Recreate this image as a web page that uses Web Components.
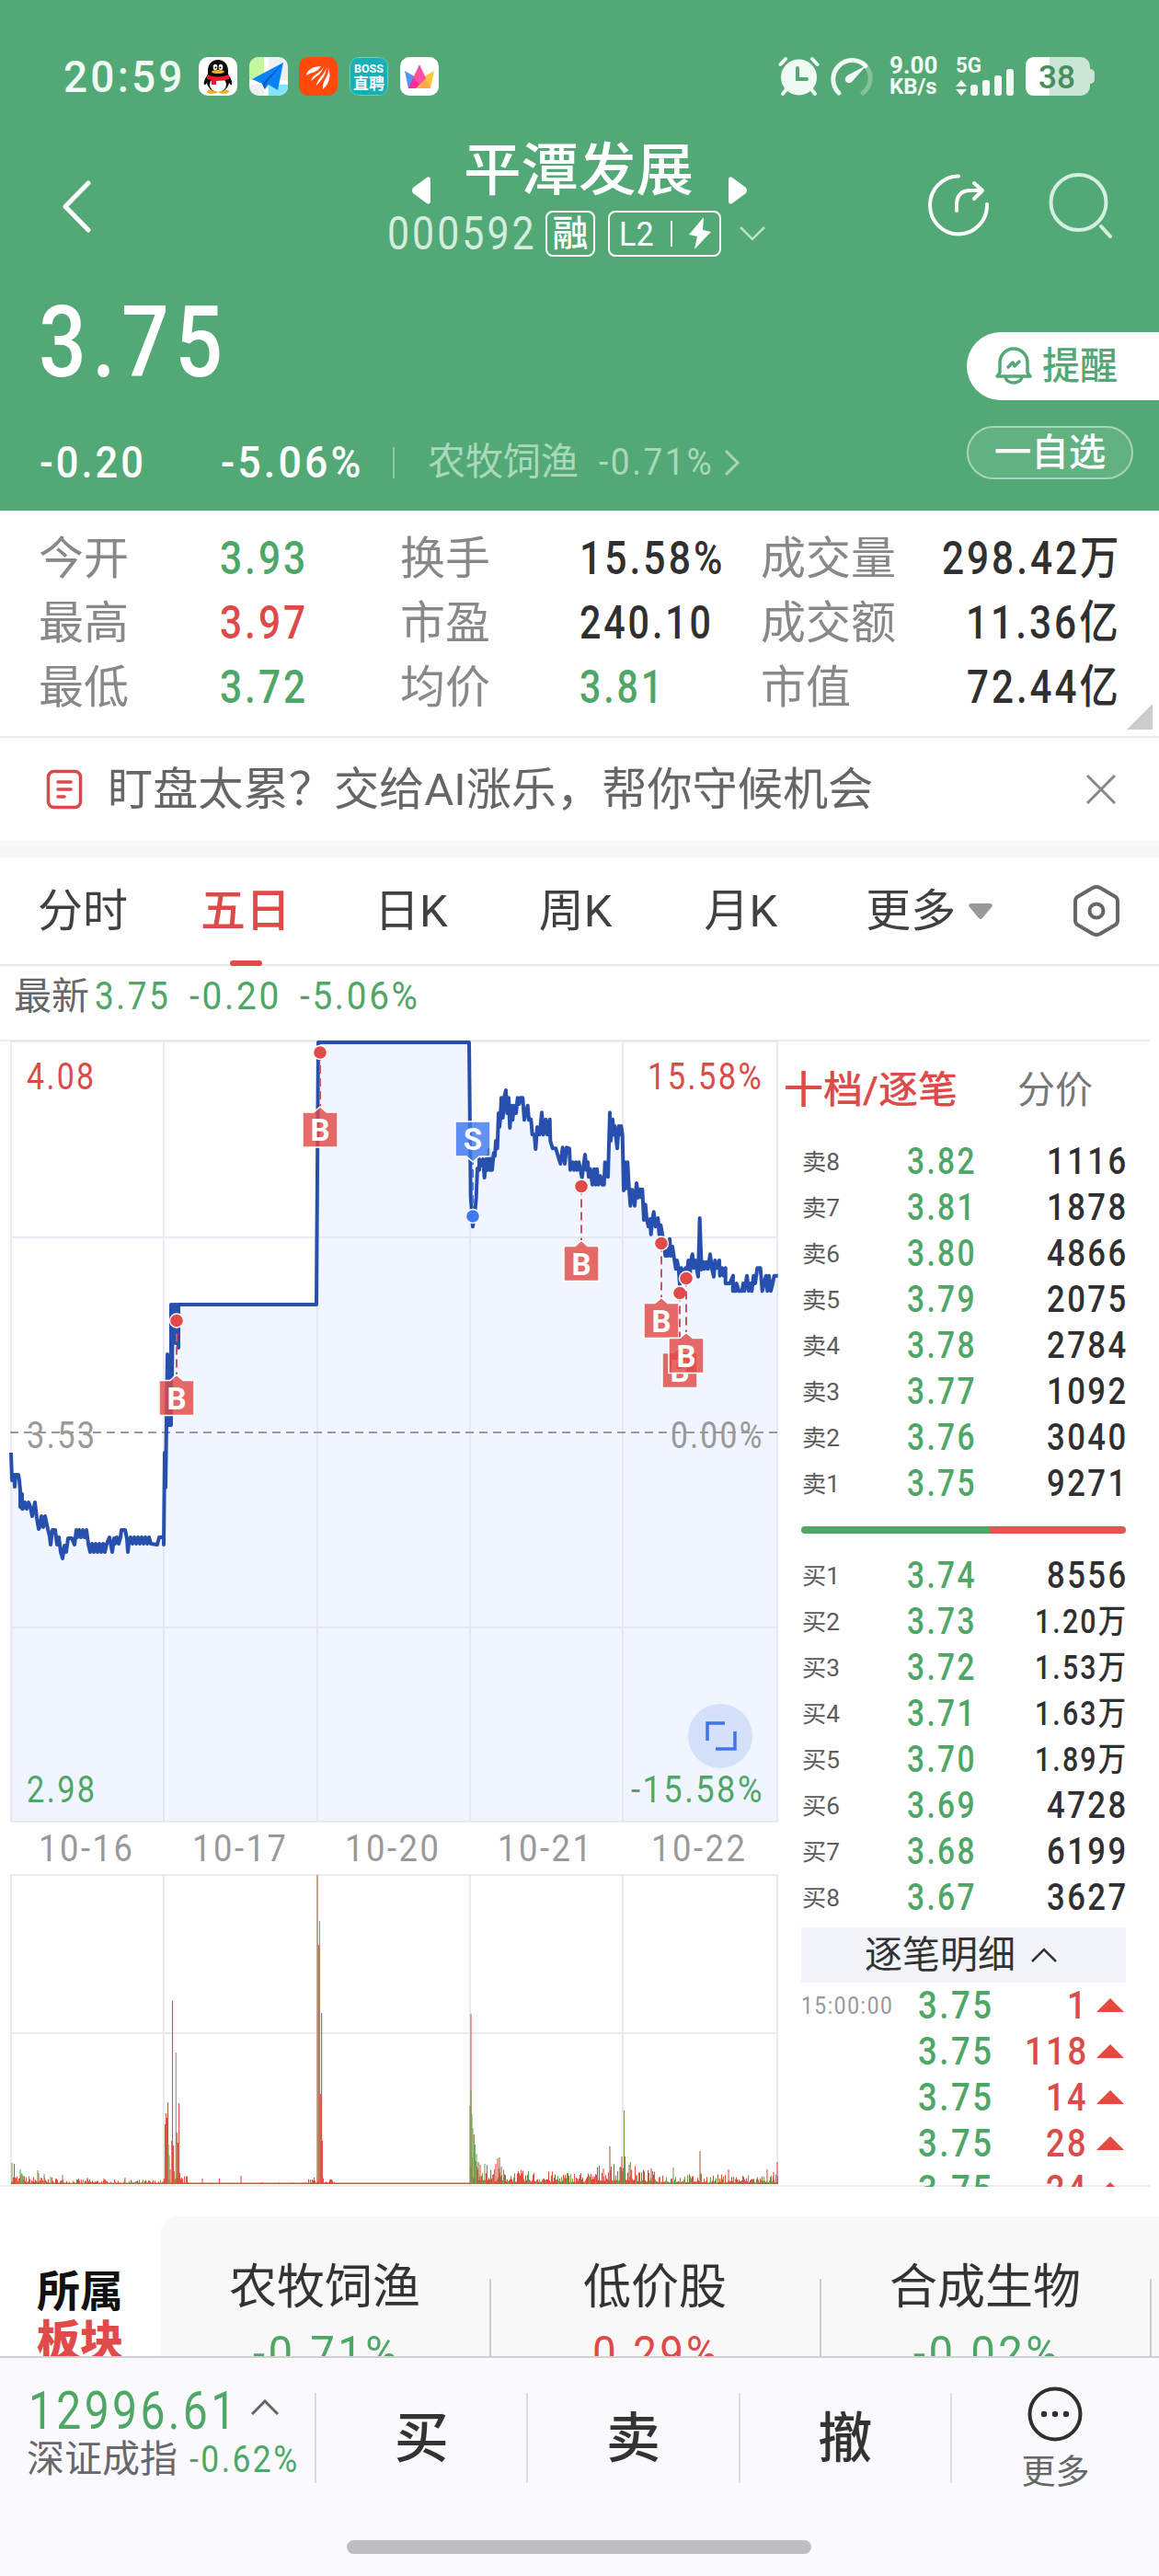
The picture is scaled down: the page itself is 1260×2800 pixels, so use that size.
<!DOCTYPE html>
<html lang="zh-CN">
<head>
<meta charset="utf-8">
<title>平潭发展 000592</title>
<style>
  body {
    margin: 0;
    width: 1260px;
    height: 2800px;
    overflow: hidden;
    background: #fefefe;
    font-family: Roboto, "Noto Sans CJK SC", sans-serif;
    font-size: 49px;
    line-height: 1;
    color: #333;
    --up: #dd4b49;
    --down: #4fa767;
    --line: #ececec;
  }
</style>
</head>
<body>
<stock-header></stock-header>
<quote-stats></quote-stats>
<notice-bar>盯盘太累？交给AI涨乐，帮你守候机会</notice-bar>
<period-tabs></period-tabs>
<market-panel></market-panel>
<sector-strip></sector-strip>
<trade-bar></trade-bar>

<script>
// every element here is markup + styles
function define(name, css, html, render) {
  customElements.define(name, class extends HTMLElement {
    constructor() {
      super();
      this.attachShadow({ mode: 'open' });
    }
    connectedCallback() {
      const body = typeof html === 'function' ? html(this) : html;
      this.shadowRoot.innerHTML = `<style>:host { display: block; box-sizing: border-box; } * { box-sizing: border-box; } svg { display: block; flex: none; } ${css}</style>${body}`;
      if (render) render(this.shadowRoot, this);
    }
  });
}

// one line of text condensed to the width given in w, tight keeps the normal spacing
define('fit-text', `
  :host { display: inline-block; flex: none; white-space: nowrap; }
  span { display: inline-block; transform-origin: 0 50%; letter-spacing: .07em; }
  :host([tight]) span { letter-spacing: 0; }
`, el => `<span>${el.textContent}</span>`, (root, el) => {
  const span = root.querySelector('span');
  const w = Number(el.getAttribute('w'));
  const tail = parseFloat(getComputedStyle(span).letterSpacing) || 0;
  el.style.width = w + 'px';
  span.style.transform = `scaleX(${w / (span.offsetWidth - tail)})`;
});

define('status-bar', `
  :host { height: 130px; padding: 62px 70px 0 69px; }
  .bar { display: flex; align-items: center; height: 42px; color: #f1f9f4; }
  .time { font-size: 49px; font-weight: 500; margin-right: 18px; }
  .apps { display: flex; gap: 12.7px; }
  .apps svg { border-radius: 10px; }
  .sys { margin-left: auto; display: flex; align-items: center; height: 42px; }
  .speed { display: flex; flex-direction: column; justify-content: space-between; height: 44px; font-weight: 700; margin: 0 20px 0 18px; font-size: 26px; line-height: 21px; }
  .speed fit-text + fit-text { font-size: 23px; }
`, `
  <div class="bar">
    <fit-text class="time" w="129">20:59</fit-text>
    <div class="apps">
      <svg width="42" height="42" viewBox="0 0 42 42">
        <rect width="42" height="42" fill="#fff"/>
        <ellipse cx="15" cy="37.500" rx="6" ry="2.500" fill="#f3b12c"/><ellipse cx="27" cy="37.500" rx="6" ry="2.500" fill="#f3b12c"/>
        <path d="M21 3c-7 0-11 5-11 12v4c-3 4-5 8-4 11 1 1 2-1 3-2 1 6 6 10 12 10s11-4 12-10c1 1 2 3 3 2 1-3-1-7-4-11v-4C32 8 28 3 21 3z" fill="#080808"/>
        <ellipse cx="21" cy="30" rx="9" ry="8" fill="#fff"/>
        <ellipse cx="18" cy="11" rx="2.300" ry="3.300" fill="#fff"/><ellipse cx="24" cy="11" rx="2.300" ry="3.300" fill="#fff"/>
        <circle cx="18.500" cy="11.500" r="1"/><circle cx="23.500" cy="11.500" r="1"/>
        <ellipse cx="21" cy="16" rx="7" ry="2" fill="#f3a72c"/>
        <path d="M9 19q12 5 24 0v5q-6 2-14 2v4h-5v-5l-5-1z" fill="#e8192d"/>
      </svg>
      <svg width="42" height="42" viewBox="0 0 42 42">
        <rect width="42" height="42" fill="#eef1f3"/><path d="M0 0h16v26H0z" fill="#c3f89e"/><path d="M20 30h22v12H20z" fill="#86e2fd"/>
        <path d="M16 0h5v42h-5zM0 25h42v5H0z" fill="#fff"/>
        <path d="M37 6L3 24l11 5 3 6 4-5 10 6z" fill="#0a83f8"/><path d="M37 6L14 29l3 6 1-6z" fill="#0659c4"/>
      </svg>
      <svg width="42" height="42" viewBox="0 0 42 42">
        <rect width="42" height="42" fill="#ff4a0b"/>
        <g fill="#fff"><path d="M24 10C16 10 8 14 8 20c6-4 12-3 16-10z"/><path d="M27 9c-1 8-12 9-14 17 7-6 13-8 14-17z"/><path d="M29 9c2 9-9 13-10 22 6-7 12-12 10-22z"/><path d="M31 10c4 10-6 14-5 25 7-6 10-15 5-25z"/></g>
      </svg>
      <svg width="42" height="42" viewBox="0 0 42 42">
        <rect x=".5" y=".5" width="41" height="41" rx="9" fill="#18afb6" stroke="#68d0c0"/>
        <text x="5" y="17" font-size="12.500" font-weight="700" fill="#fff" textLength="32" lengthAdjust="spacingAndGlyphs">BOSS</text>
        <text x="21" y="34.500" font-size="17" font-weight="700" fill="#fff" text-anchor="middle">直聘</text>
      </svg>
      <svg width="42" height="42" viewBox="0 0 42 42">
        <rect width="42" height="42" fill="#fff"/>
        <path d="M5 15l14 8-2 11H9z" fill="#5b8df5"/><path d="M37 15l-14 8 2 11h8z" fill="#ffc53a"/>
        <path d="M21 8l7 15-7 11-7-11z" fill="#ff4fa0"/><path d="M14 23l12 11H9z" fill="#f12e9b"/><path d="M28 23L17 34h16z" fill="#ffa74c"/>
      </svg>
    </div>
    <div class="sys">
      <svg width="45" height="44" viewBox="0 0 45 44">
        <g stroke="#f1f9f4" stroke-width="4" stroke-linecap="round"><path d="M2.500 9L8 3M42.500 9L37 3M9 36l-4 5M36 36l4 5"/></g>
        <circle cx="22.500" cy="23" r="19.500" fill="#f1f9f4"/><path d="M21 13v12h10" fill="none" stroke="#53a975" stroke-width="4" stroke-linecap="round"/>
      </svg>
      <svg width="48" height="44" viewBox="0 0 48 44" style="margin-left:10px" fill="none" stroke-linecap="round">
        <path d="M40 10.500A20 20 0 0 1 37 40" stroke="#83c29b" stroke-width="5"/>
        <path d="M11 40A20 20 0 1 1 40 10.500" stroke="#f1f9f4" stroke-width="5"/>
        <path d="M41 10L20 21q-4 4-1 7 4 3 7-1z" fill="#f1f9f4"/>
      </svg>
      <div class="speed"><fit-text tight w="52">9.00</fit-text><fit-text tight w="52">KB/s</fit-text></div>
      <svg width="64" height="44" viewBox="0 0 64 44" fill="#f1f9f4">
        <text x="0" y="18" font-size="24" font-weight="700" textLength="28" lengthAdjust="spacingAndGlyphs">5G</text>
        <path d="M6 26l6 7H0zM6 43l6-7H0z"/>
        <rect x="16" y="31" width="8" height="12" rx="3"/><rect x="29" y="26" width="8" height="17" rx="3"/><rect x="42" y="21" width="8" height="22" rx="3"/><rect x="55" y="14" width="8" height="29" rx="3"/>
      </svg>
      <svg width="75" height="42" viewBox="0 0 75 42" style="margin-left:12px">
        <path d="M68 13h3q4 1 4 5v6q0 4-4 5h-3z" fill="#cbe5d6"/><rect width="70" height="42" rx="10" fill="#cbe5d6"/>
        <path d="M10 0h16v42H10Q0 42 0 32V10Q0 0 10 0z" fill="#fff"/>
        <text x="14" y="33.500" font-size="35" font-weight="500" fill="#468d60" textLength="40" lengthAdjust="spacingAndGlyphs">38</text>
      </svg>
    </div>
  </div>
`);

define('stock-header', `
  :host { height: 555px; background: #53a975; color: #fff; }
  .nav { height: 170px; display: flex; padding-left: 66px; padding-top: 22px; }
  .back { margin-top: 43px; }
  .mid { width: 430px; margin-left: 320px; display: flex; flex-direction: column; flex: none; }
  .name { display: flex; height: 68px; align-items: center; font-size: 62.500px; font-weight: 500; padding-left: 28px; }
  .name svg { margin-top: 42px; }
  .name span { margin: 0 38px 0 36px; width: 250px; }
  .code { display: flex; align-items: center; height: 50px; margin-top: 9px; padding-left: 1px; }
  .code > fit-text { color: #d5ecdf; font-size: 50px; font-weight: 400; }
  .tag { height: 50px; border: 2.500px solid #fff; border-radius: 8px; display: flex; align-items: center; justify-content: center; font-size: 39px; }
  .rong { width: 54px; margin: 0 14px 0 12px; font-weight: 500; }
  .level { width: 123px; font-size: 37px; gap: 18px; }
  .level i { width: 2px; height: 28px; background: #fff; margin-right: 1px; }
  .level svg { margin-left: -1px; }
  .acts { display: flex; margin: 36px 0 0 158px; gap: 64px; }
  .price { height: 60px; display: flex; justify-content: space-between; padding-left: 42px; }
  .big { font-size: 107px; font-weight: 500; line-height: 146px; }
  .remind { width: 209px; height: 74px; margin-top: 61px; border-radius: 37px 0 0 37px; background: #fff; color: #53a975; display: flex; align-items: center; font-size: 41px; font-weight: 500; padding-left: 31px; gap: 11px; }
  .row { height: 79px; margin-top: 103px; display: flex; align-items: center; font-size: 49px; padding-left: 43px; font-weight: 500; }
  .row i { width: 2px; height: 34px; background: #91c9a7; margin: 0 36px 0 35px; }
  .dim { font-size: 41px; color: #a9d8bd; font-weight: 400; }
  .watch { margin-left: auto; margin-right: 28px; width: 181px; height: 58px; border: 2px solid #a9d4ba; border-radius: 29px; background: #61b181; display: flex; align-items: center; justify-content: center; align-self: flex-start; font-size: 40.500px; }
`, `
  <status-bar></status-bar>
  <div class="nav">
    <svg class="back" width="34" height="58" viewBox="0 0 34 58" fill="none" stroke="#fff" stroke-width="5" stroke-linecap="round" stroke-linejoin="round"><path d="M30 4L5 29.500 30 55"/></svg>
    <div class="mid">
      <div class="name">
        <svg width="20" height="30" viewBox="0 0 20 30" fill="#fff"><path d="M20 2v26q-2 3-4 1L1 18q-2-3 0-6L16 1q2-2 4 1z"/></svg>
        <span>平潭发展</span>
        <svg width="20" height="30" viewBox="0 0 20 30" fill="#fff"><path d="M0 2v26q2 3 4 1l15-11q2-3 0-6L4 1Q2-1 0 2z"/></svg>
      </div>
      <div class="code">
        <fit-text w="160">000592</fit-text>
        <div class="tag rong">融</div>
        <div class="tag level"><fit-text tight w="38">L2</fit-text><i></i>
          <svg width="24" height="36" viewBox="0 0 24 36" fill="#fff"><path d="M16 0L0 19l9 2-3 14L24 16l-9-2z"/></svg>
        </div>
        <svg width="28" height="16" viewBox="0 0 28 16" style="margin-left:20px" fill="none" stroke="#bfe0cc" stroke-width="2.500"><path d="M1 1l13 13L27 1"/></svg>
      </div>
    </div>
    <div class="acts">
      <svg width="68" height="72" viewBox="0 0 68 72" fill="none" stroke="#fff" stroke-width="4" stroke-linecap="round" stroke-linejoin="round">
        <path d="M34 3.500A31 31.500 0 1 0 65 34"/><path d="M32 41V33q1-14 15-14h12M51 11l9 8-9 9"/>
      </svg>
      <svg width="72" height="72" viewBox="0 0 72 72" fill="none" stroke="#d5f0e0" stroke-width="4" stroke-linecap="round"><circle cx="32.500" cy="32" r="30"/><path d="M57 58l10 11"/></svg>
    </div>
  </div>
  <div class="price">
    <fit-text class="big" w="200">3.75</fit-text>
    <div class="remind">
      <svg width="40" height="42" viewBox="0 0 40 42" fill="none" stroke="#53a975" stroke-width="3.500" stroke-linejoin="round" stroke-linecap="round">
        <path d="M2 32l3-4V17a15 15 0 0 1 30 0v11l3 4z"/><path d="M11 33c2 8 16 8 18 0M14 22l5-5 2 4 5-5"/>
      </svg>提醒
    </div>
  </div>
  <div class="row">
    <fit-text w="113">-0.20</fit-text>
    <fit-text w="152" style="margin-left:84px">-5.06%</fit-text><i></i>
    <span class="dim">农牧饲渔</span>
    <fit-text class="dim" w="123" style="margin-left:22px">-0.71%</fit-text>
    <svg width="18" height="30" viewBox="0 0 18 30" style="margin-left:13px" fill="none" stroke="#a9d4ba" stroke-width="3"><path d="M2 2l13 13L2 28"/></svg>
    <div class="watch">一自选</div>
  </div>
`);

define('quote-stats', `
  :host { height: 247px; padding: 17px 0 0 42px; border-bottom: 2px solid var(--line); position: relative; }
  .grid { display: grid; grid-template-columns: 197px 196px 195px 197px 150px 239px; grid-auto-rows: 70px; align-items: center; width: 1174px; }
  .grid > :nth-child(6n) { justify-self: end; }
  span { color: #888; }
  fit-text { font-weight: 500; font-size: 50px; color: #303030; }
  .up { color: var(--up); }
  .down { color: var(--down); }
  .fold { position: absolute; right: 7px; bottom: 7px; }
`, `
  <div class="grid">
    <span>今开</span><fit-text class="down" w="93">3.93</fit-text><span>换手</span><fit-text w="155">15.58%</fit-text><span>成交量</span><fit-text w="192">298.42万</fit-text>
    <span>最高</span><fit-text class="up" w="93">3.97</fit-text><span>市盈</span><fit-text w="143">240.10</fit-text><span>成交额</span><fit-text w="166">11.36亿</fit-text>
    <span>最低</span><fit-text class="down" w="93">3.72</fit-text><span>均价</span><fit-text class="down" w="90">3.81</fit-text><span>市值</span><fit-text w="165">72.44亿</fit-text>
  </div>
  <svg class="fold" width="28" height="28" viewBox="0 0 28 28"><path d="M28 0v28H0z" fill="#ccc"/></svg>
`);

define('notice-bar', `
  :host { display: flex; align-items: center; height: 112px; padding: 0 47px 0 50px; color: #666; }
  .text { margin-left: 27px; }
  svg:last-child { margin-left: auto; }
`, el => `
  <svg width="40" height="44" viewBox="0 0 40 44" fill="none" stroke="#d9494c" stroke-width="3.500" stroke-linecap="round">
    <rect x="2.500" y="2.500" width="35" height="39" rx="6"/><path d="M13 14h14M13 22h14M13 30h7"/>
  </svg>
  <fit-text tight class="text" w="832">盯盘太累？交给AI涨乐，帮你守候机会</fit-text>
  <svg width="32" height="32" viewBox="0 0 32 32" stroke="#888" stroke-width="3"><path d="M1 1l30 30M31 1L1 31"/></svg>
`);

define('period-tabs', `
  :host { height: 136px; border-top: 18px solid #f7f7f7; border-bottom: 2px solid #e9e9e9; }
  .tabs { display: flex; align-items: center; height: 116px; padding-left: 41px; color: #404040; }
  .tabs > * { flex: none; }
  .tab { height: 116px; display: flex; flex-direction: column; align-items: center; justify-content: center; }
  .on { color: var(--up); font-weight: 500; }
  .on::after { content: ""; width: 35px; height: 6px; border-radius: 3px; background: #e04b4a; margin-top: 29px; margin-bottom: -35px; }
`, `
  <div class="tabs">
    <div class="tab" style="width:98px">分时</div>
    <div class="tab on" style="width:98px;margin-left:79px">五日</div>
    <div class="tab" style="margin-left:91px">日K</div>
    <div class="tab" style="margin-left:99px">周K</div>
    <div class="tab" style="margin-left:100px">月K</div>
    <div class="tab" style="margin-left:96px">更多</div>
    <svg width="26" height="17" viewBox="0 0 26 17" style="margin-left:14px" fill="#999"><path d="M2 0h22q3 1 1 4L15 16q-2 2-4 0L1 4Q-1 1 2 0z"/></svg>
    <svg width="52" height="58" viewBox="0 0 52 58" style="margin-left:87px" fill="none" stroke="#666" stroke-width="4" stroke-linejoin="round"><path d="M26 3q2 0 4 1l17 10q2 2 2 4v22q0 2-2 4L30 54q-4 2-8 0L5 44q-2-2-2-4V18q0-2 2-4L22 4q2-1 4-1z"/><circle cx="26" cy="29" r="7.500"/></svg>
  </div>
`);

// --- price chart -----------------------------------------------------------

// fills x1..x2 with strokes between two price levels
function band(x1, x2, top, bottom) {
  const out = [];
  for (let x = x1, i = 0; x <= x2; x += 2, i++) out.push([x, i % 2 ? top : bottom]);
  return out;
}

const firstDays = [
  [12, 1579], [13, 1609], [15, 1603], [16, 1616], [17, 1603], [20, 1603], [21, 1609], [22, 1620], [22, 1638], [24, 1624], [24, 1640],
  ...band(25, 32, 1633, 1640), [33, 1638], [35, 1648], [38, 1633], [40, 1650], [42, 1662], ...band(43, 50, 1648, 1660), [52, 1662],
  [54, 1670], [55, 1679], [57, 1663], [60, 1663], [62, 1679], [64, 1671], [66, 1687], [68, 1694], [70, 1680], [72, 1687], [74, 1672],
  [78, 1672], [81, 1679], [83, 1663], ...band(84, 94, 1663, 1671), [96, 1678], ...band(98, 117, 1678, 1687), [119, 1671], [122, 1687], [124, 1672],
  ...band(125, 131, 1671, 1678), [132, 1663], [136, 1663], [138, 1672], [139, 1687], ...band(140, 165, 1671, 1678), [171, 1679], [173, 1671],
  [178, 1671], [178, 1679], [179, 1579], [180, 1617], [181, 1545], [182, 1472], [184, 1549], [185, 1500], [186, 1549], [186, 1418],
  [187, 1495], [188, 1418], [189, 1456], [190, 1418], [191, 1460], [192, 1418], [194, 1465], [194, 1418], [344, 1418], [346, 1133], [510, 1133]
];

// minute points of the last two sessions, in thirds of a pixel from 420,1120
const lastDays = `270,39 275,540 282,640 290,580 293,545 297,450 303,455 303,420 310,440 315,420 320,480 325,420 330,455 335,390 338,455 345,455
350,400 354,410 357,360 362,385 366,270 369,315 372,285 375,220 380,285 384,220 390,195 394,270 399,220 403,318 408,245 412,292 416,245 423,270
428,220 433,240 437,220 445,220 450,292 456,265 461,245 465,292 472,290 476,340 483,340 487,387 492,315 500,340 507,268 512,340 520,290 525,340
533,290 535,360 542,385 553,385 560,410 568,435 575,382 582,435 588,382 597,385 600,455 608,430 612,455 618,430 622,455 628,430 638,480 648,405
653,455 657,430 660,478 665,452 672,503 678,452 683,503 687,452 692,503 698,475 704,503 710,503 713,430 723,478 729,268 732,360 738,290 741,340
745,312 748,340 753,385 758,312 762,340 766,312 770,340 774,522 778,430 782,515 787,430 790,490 796,572 802,520 810,572 816,498 822,545 828,518
833,545 835,518 840,618 845,568 849,615 855,640 860,615 863,665 868,618 872,592 878,640 886,612 890,665 895,635 900,665 905,690 910,735 918,735
924,680 928,735 933,705 944,778 948,750 953,775 957,828 962,775 968,800 976,775 980,800 985,750 990,800 994,750 998,730 1003,775 1008,750 1012,775
1017,803 1022,612 1028,780 1034,755 1038,778 1044,755 1049,778 1056,730 1062,778 1068,803 1072,750 1078,775 1086,750 1088,800 1095,775 1100,800
1106,775 1106,825 1112,825 1120,825 1131,800 1130,850 1140,850 1142,825 1150,850 1160,850 1164,825 1168,850 1176,800 1182,850 1188,825 1192,850
1198,800 1203,825 1210,775 1220,775 1226,850 1232,825 1238,800 1243,850 1248,800 1254,850 1260,825 1265,800 1277,800`
  .trim().split(/\s+/).map(p => p.split(',').map(Number)).map(([x, y]) => [420 + x / 3, 1120 + y / 3]);

const pricePoints = [...firstDays, ...lastDays].map(p => p.map(n => +n.toFixed(1)).join(',')).join(' ');

// trades: type, x, y of the dot on the line
const trades = [['B', 192, 1435.5], ['B', 348, 1144], ['S', 514, 1322], ['B', 632, 1289.5], ['B', 719, 1351.5], ['B', 739, 1405.5], ['B', 746, 1389.5]];

function tradeMark([type, x, y]) {
  const buy = type === 'B';
  const color = buy ? '#e04a48' : '#3f7af0';
  const top = buy ? y + 65 : y - 103;
  const tip = buy
    ? `M${x - 19} ${top}h12l7-6 7 6h12v38h-38z`
    : `M${x - 19} ${top}h38v38h-12l-7 6-7-6h-12z`;
  return `
    <path d="M${x} ${y}V${buy ? top - 6 : top + 44}" stroke="${buy ? '#cc5364' : color}" stroke-width="2" stroke-dasharray="9 5"/>
    <path d="${tip}" fill="${color}" fill-opacity=".82" stroke="#fff" stroke-width="1.5" stroke-linejoin="round"/>
    <circle cx="${x}" cy="${y}" r="7.500" fill="${color}" stroke="#fff" stroke-width="1.300"/>
    <text x="${x}" y="${top + 31}" font-size="33" font-weight="700" fill="#fff" text-anchor="middle">${type}</text>`;
}

define('price-chart', `
  :host { display: grid; width: 838px; height: 852px; }
  svg, .labels { grid-area: 1 / 1; }
  .labels { display: grid; grid-template-columns: 1fr 1fr; align-content: space-between; padding: 21px 20px 16px 19px; height: 852px; font-size: 40px; }
  .labels > :nth-child(even) { justify-self: end; }
  .labels > * { height: 40px; }
  .up { color: var(--up); }
  .mid { color: #999; position: relative; top: 2px; }
  .down { color: var(--down); }
`, `
  <svg width="838" height="852" viewBox="10 1130 838 852">
    <polygon points="12,1980 ${pricePoints} 846,1387 846,1980" fill="#f0f5ff"/>
    <g stroke="#dfe3ea" stroke-opacity=".7" stroke-width="2" fill="none">
      <path d="M12 1131V1980M178 1131V1980M345 1131V1980M511 1131V1980M677 1131V1980M845 1131V1980M12 1132H846M12 1345H846M12 1769H846M12 1980H846"/>
    </g>
    <path d="M11 1557H846" stroke="#999" stroke-width="2" stroke-dasharray="9 6"/>
    <polyline points="${pricePoints}" fill="none" stroke="#274fae" stroke-width="4" stroke-linejoin="round"/>
    ${trades.map(tradeMark).join('')}
    <circle cx="783" cy="1887" r="35" fill="#d5e0fb"/>
    <path d="M788 1873h-19v19M778 1901h21v-19" fill="none" stroke="#3f74ea" stroke-width="3.500"/>
  </svg>
  <div class="labels">
    <fit-text class="up" w="73">4.08</fit-text><fit-text class="up" w="124">15.58%</fit-text>
    <fit-text class="mid" w="74">3.53</fit-text><fit-text class="mid" w="99">0.00%</fit-text>
    <fit-text class="down" w="74">2.98</fit-text><fit-text class="down" w="142">-15.58%</fit-text>
  </div>
`);

// --- volume chart ----------------------------------------------------------

const RED = '#e54c42', GREEN = '#69a84b', BROWN = '#a8633b';

const volumeSpikes = [
  [13, 23, GREEN], [15.5, 22, BROWN], [22, 16, GREEN], [23, 12, GREEN], [24, 11, GREEN], [25, 9, GREEN], [41, 15, GREEN], [42, 12, BROWN], [48, 11, GREEN], [55, 8, GREEN], [68, 10, GREEN],
  [95, 7, RED], [113, 6, RED], [136, 7, GREEN], [179.5, 65, RED], [180.5, 77, RED], [181.5, 72, RED], [182.5, 89, BROWN], [183, 43, GREEN], [184, 31, GREEN],
  [185, 16, RED], [187.5, 199, RED], [186.8, 47, RED], [188.5, 42, RED], [189.5, 14, GREEN], [191.2, 143, GREEN], [192.3, 56, BROWN], [193.4, 45, RED],
  [194.6, 88, RED], [195.6, 12, RED], [220, 6, RED], [238.5, 6, RED], [262, 9, RED], [345, 336, BROWN], [346.3, 260, BROWN], [347.5, 286, GREEN], [348.6, 98, RED],
  [349.6, 186, BROWN], [350.4, 47, RED], [511, 85, GREEN], [512, 185, RED], [512, 102, GREEN], [513, 76, GREEN], [514, 61, GREEN], [515.3, 54, BROWN],
  [516.4, 43, GREEN], [518, 33, GREEN], [520, 24, BROWN], [522, 21, RED], [527, 22, GREEN], [539, 22, RED], [541, 28, RED], [543, 29, BROWN], [545, 19, BROWN],
  [656, 17, RED], [663, 41, BROWN], [674, 18, RED], [676, 30, RED], [678.5, 80, GREEN], [679.5, 30, RED], [684, 21, RED], [685.3, 24, GREEN], [708, 17, RED],
  [732, 18, GREEN], [761, 36, BROWN], [762, 12, GREEN], [792, 16, RED], [834, 16, RED], [841, 13, RED], [845, 24, RED]
];

function volumeBars() {
  let seed = 7;
  const rnd = () => (seed = (seed * 16807) % 2147483647) / 2147483647;
  // usual turnover level at a given x
  const level = x => {
    if (x < 178) return 3 + 5 * Math.exp(-(x - 12) / 40);
    if (x < 345) return x < 205 ? 6 : x > 335 ? 5 : 1.2;
    if (x < 511) return x < 365 ? 4 : 1;
    if (x < 677) return 9 + 16 * Math.exp(-(x - 511) / 18) + (x > 645 ? 5 : 0);
    return 7 + 12 * Math.exp(-(x - 677) / 20);
  };
  let out = '';
  for (let x = 12.5; x < 846; x += 1) {
    const h = Math.max(1.5, level(x) * (.25 + 1.3 * rnd() ** 2));
    const pick = rnd();
    const quiet = x > 196 && x < 511;
    const color = quiet || pick < .55 ? RED : pick < .8 ? GREEN : BROWN;
    out += `<path d="M${x} 2374v-${h.toFixed(1)}" stroke="${color}"/>`;
  }
  for (const [x, h, color] of volumeSpikes) out += `<path d="M${x} 2374v-${h}" stroke="${color}"/>`;
  return out;
}

define('volume-chart', `
  :host { width: 838px; height: 340px; }
`, `
  <svg width="838" height="340" viewBox="10 2037 838 340">
    <path d="M11 2038H846M11 2210H846M12 2038V2376M178 2038V2376M345 2038V2376M511 2038V2376M677 2038V2376M845 2038V2376" stroke="#eaeaea" stroke-width="2"/>
    <g stroke-width="1.100">${volumeBars()}</g>
  </svg>
`);

// --- order book ------------------------------------------------------------

define('order-row', `
  :host { display: flex; align-items: center; height: 50px; font-size: 40px; font-weight: 500; }
  .side { width: 114px; font-size: 25px; font-weight: 400; color: #5c5c5c; display: flex; }
  .price { color: var(--down); }
  .qty { margin-left: auto; color: #303030; }
  .wan { font-size: 36px; }
`, el => {
  const qty = el.getAttribute('qty');
  const wan = qty.includes('万');
  return `<span class="side"><fit-text tight w="41">${el.getAttribute('side')}</fit-text></span>
    <fit-text class="price" w="74">${el.getAttribute('price')}</fit-text>
    <fit-text class="qty ${wan ? 'wan' : ''}" w="${wan ? 99 : 86}">${qty}</fit-text>`;
});

define('tick-row', `
  :host { display: flex; align-items: center; height: 50px; font-size: 42px; font-weight: 500; flex: none; }
  .time { width: 127px; font-size: 26px; font-weight: 400; color: #999; display: flex; }
  .price { color: var(--down); }
  .qty { margin-left: auto; margin-right: 11px; color: var(--up); }
  svg { margin-right: 2px; }
`, el => {
  const qty = el.getAttribute('qty');
  const time = el.getAttribute('time');
  return `<span class="time">${time ? `<fit-text w="99">${time}</fit-text>` : ''}</span>
    <fit-text class="price" w="80">${el.getAttribute('price')}</fit-text>
    <fit-text class="qty" w="${qty.length * 23 - 2}">${qty}</fit-text>
    <svg width="30" height="16" viewBox="0 0 30 16"><path d="M15 0L30 15H0z" fill="#e5493f"/></svg>`;
});

const asks = [[8, '3.82', '1116'], [7, '3.81', '1878'], [6, '3.80', '4866'], [5, '3.79', '2075'], [4, '3.78', '2784'], [3, '3.77', '1092'], [2, '3.76', '3040'], [1, '3.75', '9271']];
const bids = [[1, '3.74', '8556'], [2, '3.73', '1.20万'], [3, '3.72', '1.53万'], [4, '3.71', '1.63万'], [5, '3.70', '1.89万'], [6, '3.69', '4728'], [7, '3.68', '6199'], [8, '3.67', '3627']];
const ticks = [['15:00:00', '1'], ['', '118'], ['', '14'], ['', '28'], ['', '24']];
const bookRows = (name, rows) => rows.map(([n, price, qty]) => `<order-row side="${name}${n}" price="${price}" qty="${qty}"></order-row>`).join('');

define('order-book', `
  :host { width: 402px; height: 1245px; overflow: hidden; }
  .tabs { display: flex; height: 106px; align-items: center; font-size: 41px; padding-left: 4px; }
  .tabs .on { color: var(--up); font-weight: 500; }
  .tabs span { margin-left: 65px; color: #777; }
  .book { width: 353px; margin-left: 23px; }
  .book order-row { padding: 0 0 0 1px; }
  .ratio { display: flex; height: 8px; margin: 21px 0; border-radius: 4px; overflow: hidden; }
  .ratio i { width: 205px; background: #4fa767; }
  .ratio b { flex: 1; background: #e35650; }
  .head { height: 60px; margin-top: 7px; padding-right: 6px; background: #f3f4f9; display: flex; align-items: center; justify-content: center; font-size: 41px; gap: 17px; }
`, `
  <div class="tabs"><fit-text tight class="on" w="189">十档/逐笔</fit-text><span>分价</span></div>
  <div class="book">
    ${bookRows('卖', asks)}
    <div class="ratio"><i></i><b></b></div>
    ${bookRows('买', bids)}
    <div class="head">逐笔明细<svg width="28" height="16" viewBox="0 0 28 16" fill="none" stroke="#333" stroke-width="2.500"><path d="M1 15L14 2l13 13"/></svg></div>
    ${ticks.map(([time, qty]) => `<tick-row time="${time}" price="3.75" qty="${qty}"></tick-row>`).join('')}
  </div>
`);

define('market-panel', `
  :host { height: 1359px; }
  .latest { display: flex; align-items: center; height: 80px; padding: 0 0 14px 15px; font-size: 42px; color: var(--down); }
  .latest span { color: #666; font-size: 41px; margin-right: 6px; }
  .latest fit-text { margin-right: 23px; }
  .cols { display: flex; width: 1250px; height: 1247px; border-top: 2px solid var(--line); border-bottom: 2px solid var(--line); }
  .charts { margin: -2px 0 0 10px; width: 838px; }
  .dates { height: 55px; display: grid; grid-template-columns: repeat(5, 166.4px); justify-items: center; align-items: center; color: #999; font-size: 41px; }
`, `
  <div class="latest"><span>最新</span><fit-text w="80">3.75</fit-text><fit-text w="97">-0.20</fit-text><fit-text w="128">-5.06%</fit-text></div>
  <div class="cols">
    <div class="charts">
      <price-chart></price-chart>
      <div class="dates">${['10-16', '10-17', '10-20', '10-21', '10-22'].map(d => `<fit-text w="102">${d}</fit-text>`).join('')}</div>
      <volume-chart></volume-chart>
    </div>
    <order-book></order-book>
  </div>
`);

define('sector-strip', `
  :host { display: flex; height: 152px; overflow: hidden; }
  .title { width: 175px; padding: 55px 0 0 40px; font-size: 47px; line-height: 54px; font-weight: 700; color: #111; flex: none; }
  .title b { color: #e04b4a; display: block; }
  .list { display: flex; flex: none; width: 1100px; background: #f8f8f8; border-radius: 18px 0 0 0; }
  .item { width: 359px; height: 152px; padding: 52px 3px 0 0; display: flex; flex-direction: column; align-items: center; font-size: 52px; flex: none;
    background: linear-gradient(#ccc, #ccc) 357px 68px / 2px 100px no-repeat; }
  .item fit-text { margin-top: 20px; font-size: 50px; color: var(--down); }
  .item .up { color: var(--up); }
`, `
  <div class="title">所属<b>板块</b></div>
  <div class="list">
    <div class="item">农牧饲渔<fit-text w="157">-0.71%</fit-text></div>
    <div class="item">低价股<fit-text class="up" w="136">0.29%</fit-text></div>
    <div class="item">合成生物<fit-text w="157">-0.02%</fit-text></div>
  </div>
`);

define('trade-bar', `
  :host { height: 239px; background: #fafafc; border-top: 2px solid #d0d0d2; }
  .bar { display: flex; height: 136px; padding-top: 38px; }
  .index { width: 342px; padding-left: 31px; margin-top: -9px; flex: none; }
  .line { display: flex; align-items: center; }
  .line .num { font-size: 57px; color: var(--down); }
  .sub { margin-top: 4px; font-size: 41px; color: #66686e; margin-left: -2px; }
  .sub fit-text { font-size: 40px; color: var(--down); margin-left: 13px; }
  .btn { width: 230.300px; height: 98px; border-left: 2px solid #dddde0; display: flex; align-items: center; justify-content: center; font-size: 59px; font-weight: 500; }
  .more { flex: 1; flex-direction: column; font-size: 37px; color: #666; font-weight: 400; gap: 15px; }
  .home { width: 505px; height: 15px; border-radius: 8px; background: #bebec0; margin: 62px 0 0 377px; }
`, `
  <div class="bar">
    <div class="index">
      <div class="line"><fit-text class="num" w="225">12996.61</fit-text><svg width="30" height="17" viewBox="0 0 30 17" style="margin:-8px 0 0 17px" fill="none" stroke="#666" stroke-width="3"><path d="M1 16L15 2l14 14"/></svg></div>
      <div class="line sub">深证成指<fit-text w="117">-0.62%</fit-text></div>
    </div>
    <div class="btn">买</div><div class="btn">卖</div><div class="btn">撤</div>
    <div class="btn more">
      <svg width="60" height="60" viewBox="0 0 60 60"><circle cx="30" cy="30" r="27.500" fill="none" stroke="#303030" stroke-width="4"/><g fill="#303030"><circle cx="18" cy="30" r="3.200"/><circle cx="30" cy="30" r="3.200"/><circle cx="42" cy="30" r="3.200"/></g></svg>
      更多
    </div>
  </div>
  <div class="home"></div>
`);
</script>
</body>
</html>
